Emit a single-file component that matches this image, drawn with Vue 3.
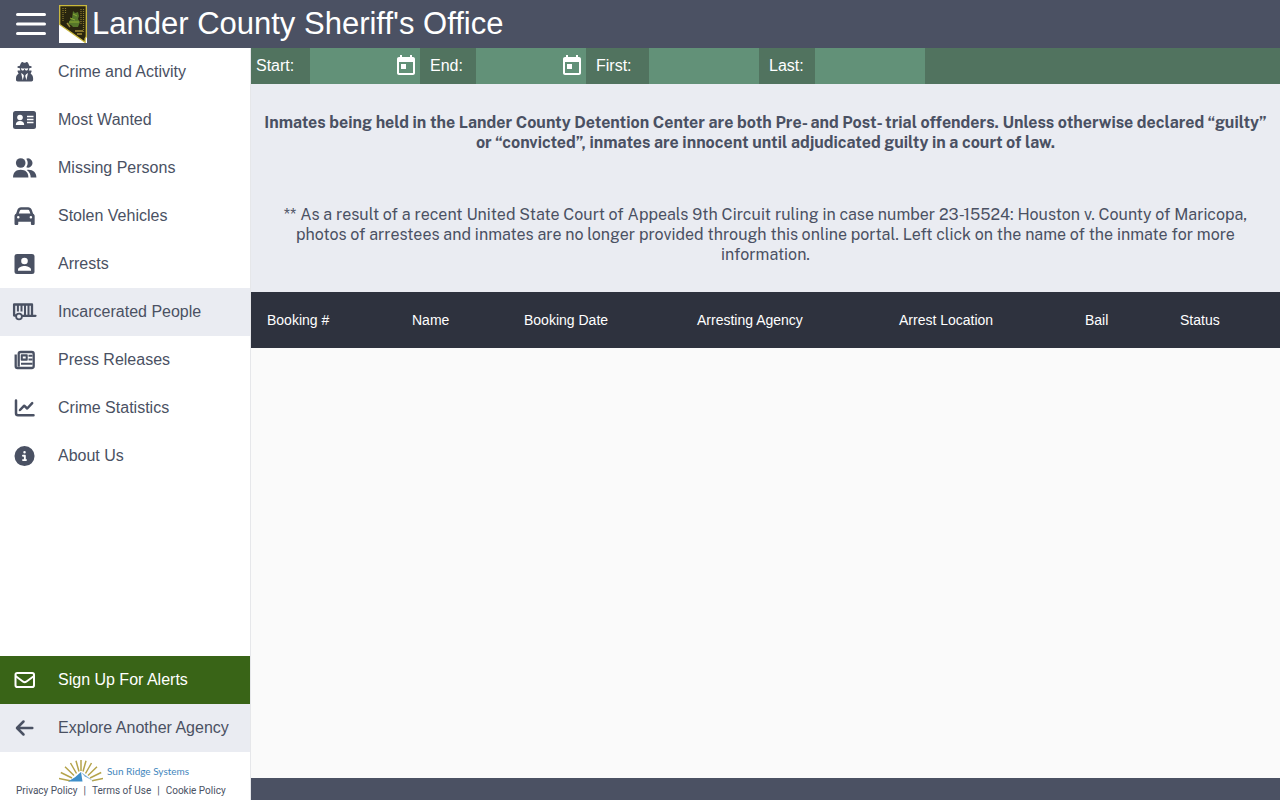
<script setup>
import { ref } from 'vue';

const activeItem = ref('Incarcerated People');
const menuOpen = ref(true);

const menuItems = [
  { label: 'Crime and Activity', icon: 'secret' },
  { label: 'Most Wanted', icon: 'card' },
  { label: 'Missing Persons', icon: 'people' },
  { label: 'Stolen Vehicles', icon: 'car' },
  { label: 'Arrests', icon: 'portrait' },
  { label: 'Incarcerated People', icon: 'trailer' },
  { label: 'Press Releases', icon: 'news' },
  { label: 'Crime Statistics', icon: 'chart' },
  { label: 'About Us', icon: 'info' }
];

const filters = ref([
  { id: 'start', label: 'Start:', date: true, value: '' },
  { id: 'end', label: 'End:', date: true, value: '' },
  { id: 'first', label: 'First:', date: false, value: '' },
  { id: 'last', label: 'Last:', date: false, value: '' }
]);

// share = relative column width
const columns = [
  { label: 'Booking #', share: 145 },
  { label: 'Name', share: 112 },
  { label: 'Booking Date', share: 173 },
  { label: 'Arresting Agency', share: 202 },
  { label: 'Arrest Location', share: 186 },
  { label: 'Bail', share: 95 },
  { label: 'Status', share: 116 }
];
const totalShare = columns.reduce((sum, c) => sum + c.share, 0);
</script>

<template>
  <div class="app">
    <header class="topbar">
      <button class="menu-button" type="button" aria-label="Menu" @click="menuOpen = !menuOpen">
        <svg viewBox="0 0 30 22" aria-hidden="true">
          <path d="M1.5 1.5h27M1.5 11h27M1.5 20.5h27" stroke="currentColor" stroke-width="3" stroke-linecap="round"/>
        </svg>
      </button>
      <svg class="agency-logo" viewBox="0 0 28 38" aria-hidden="true">
        <path d="M0 0h28v38H0z" fill="#fff"/>
        <path d="M.7.7h26.600v31l-1.200 2v3.600L.7 19.500z" fill="#29250f" stroke="#c9b83c" stroke-width="1.300"/>
        <path d="M4 3v14M6.500 3v5M22 4v15M24.500 4v23" stroke="#8a7a2c" stroke-width="1.200" stroke-dasharray="1 1"/>
        <path d="M14 6l2 2 3-1 1 4-1 3 2 3-2 5h-5l-2-2-3-1 2-4 2-2z" fill="#56772a"/>
        <path d="M10 17h10M11 13l5 2M14 9l4 2" stroke="#8dac32" stroke-width="1"/>
        <path d="M8 18l3 4M16 26h8M18 29h5" stroke="#a18d38" stroke-width="1.300"/>
      </svg>
      <h1>Lander County Sheriff's Office</h1>
    </header>

    <div class="body">
      <aside v-show="menuOpen" class="sidebar">
        <nav>
          <a
            v-for="item in menuItems"
            :key="item.label"
            href="#"
            class="nav-item"
            :class="{ active: item.label === activeItem }"
            @click.prevent="activeItem = item.label"
          >
            <svg class="nav-icon" viewBox="0 0 48 48" fill="currentColor" aria-hidden="true">
              <g v-if="item.icon === 'secret'" transform="translate(16 14) scale(.0382)">
                <path d="M383.9 308.3l23.9-62.6c4-10.5-3.7-21.7-15-21.7h-58.5c11-18.9 17.8-40.6 17.8-64v-.3c39.2-7.8 64-19.1 64-31.7 0-13.3-27.3-25.1-70.1-33-9.2-32.8-27-65.8-40.6-82.8-9.5-11.9-25.9-15.6-39.5-8.8l-27.6 13.8c-9 4.5-19.6 4.5-28.6 0L182.1 3.4c-13.6-6.8-30-3.1-39.5 8.8-13.5 17-31.4 50-40.6 82.8-42.7 7.9-70 19.7-70 33 0 12.6 24.8 23.9 64 31.7v.3c0 23.4 6.8 45.1 17.8 64H56.3c-11.5 0-19.2 11.7-14.7 22.3l25.8 60.2C27.3 329.8 0 372.7 0 422.4v44.800C0 491.9 20.1 512 44.8 512h358.4c24.7 0 44.8-20.1 44.8-44.8v-44.8c0-48.4-25.8-90.4-64.1-114.1zM176 480l-41.6-192 49.6 32 24 40-32 120zm96 0l-32-120 24-40 49.6-32L272 480zm41.7-298.500c-3.9 11.9-7 24.6-16.5 33.4-10.1 9.3-48 22.4-64-25-2.8-8.4-15.4-8.4-18.3 0-17 50.2-56 32.4-64 25-9.5-8.8-12.7-21.5-16.5-33.4-.8-2.5-6.3-5.7-6.3-5.8v-10.8c28.3 3.6 61 5.8 96 5.8s67.7-2.1 96-5.8v10.8c-.1.1-5.6 3.2-6.4 5.8z"/>
              </g>
              <g v-else-if="item.icon === 'card'">
                <rect x="13" y="15" width="23" height="18" rx="2.5"/>
                <circle cx="20" cy="21.500" r="2.800" fill="#fff"/>
                <path d="M15.800 29c0-2.600 1.600-4 4.200-4s4.200 1.400 4.200 4z" fill="#fff"/>
                <path d="M27 20.500h6.500M27 23.500h6.500M27 26.500h6.500" stroke="#fff" stroke-width="1.300"/>
              </g>
              <g v-else-if="item.icon === 'people'">
                <circle cx="20.700" cy="19" r="4.800"/>
                <path d="M13 33.500c0-5 3-7.700 7.700-7.700s7.700 2.700 7.700 7.700z"/>
                <path d="M26.300 14.700a4.600 4.600 0 1 1 0 8.600 7.800 7.800 0 0 0 0-8.600z"/>
                <path d="M26.800 25.900c5.600-.8 9.600 2.200 9.600 7.600h-5.700c0-3.300-1.400-5.900-3.900-7.600z"/>
              </g>
              <g v-else-if="item.icon === 'car'" transform="translate(14.500 14) scale(.0394)">
                <path d="M135.2 117.400L109.100 192H402.900l-26.100-74.600C372.300 104.600 360.200 96 346.600 96H165.400c-13.600 0-25.700 8.600-30.200 21.400zM39.600 196.800L74.800 96.300C88.300 57.800 124.600 32 165.400 32H346.600c40.800 0 77.100 25.800 90.600 64.300l35.200 100.500c23.200 9.600 39.600 32.500 39.600 59.200V400v48c0 17.700-14.300 32-32 32H448c-17.700 0-32-14.300-32-32V400H96v48c0 17.700-14.300 32-32 32H32c-17.700 0-32-14.300-32-32V400 256c0-26.700 16.400-49.600 39.600-59.200zM128 288a32 32 0 1 0 -64 0 32 32 0 1 0 64 0zm288 32a32 32 0 1 0 0-64 32 32 0 1 0 0 64z"/>
              </g>
              <g v-else-if="item.icon === 'portrait'">
                <rect x="14.500" y="14" width="20" height="20" rx="2.500"/>
                <circle cx="24.500" cy="21" r="3.300" fill="#fff"/>
                <path d="M18 30.800v-1.200c0-2.400 4.200-3.600 6.500-3.600s6.500 1.200 6.500 3.600v1.200z" fill="#fff"/>
              </g>
              <g v-else-if="item.icon === 'trailer'" fill="none" stroke="currentColor">
                <path d="M15.500 27.500h-1.400V16.500h17.900V27.500M22.500 27.800H35.500" stroke-width="2.300" stroke-linejoin="round" stroke-linecap="round"/>
                <path d="M17.900 16.500v7M21.500 16.500v7M25 16.500V27M28.500 16.500V27" stroke-width="2"/>
                <circle cx="19" cy="28.500" r="2.900" stroke-width="1.800"/>
              </g>
              <g v-else-if="item.icon === 'news'" fill="none" stroke="currentColor" stroke-width="2.300" stroke-linejoin="round">
                <path d="M18.700 30.500V18a2 2 0 0 1 2-2h11a2 2 0 0 1 2 2v12a2 2 0 0 1-2 2H17.500a1.800 1.800 0 0 1-1.800-1.800V18.500"/>
                <path d="M21.500 19h5.500v5h-5.500z" fill="currentColor" stroke-width="1.500"/>
                <path d="M22.800 20.500h2.900v2h-2.900z" fill="#fff" stroke="none"/>
                <path d="M28.500 19.800h4M28.500 23.600h4M21 27.800h11.500" stroke-width="2"/>
              </g>
              <g v-else-if="item.icon === 'chart'" fill="none" stroke="currentColor" stroke-width="2.500" stroke-linecap="round" stroke-linejoin="round">
                <path d="M16 16.500v12.800q0 2 2 2h15.500"/>
                <path d="M20 26l4.200-4.300 3 2.800 5-5.300"/>
              </g>
              <g v-else transform="translate(14.500 14) scale(.0392)">
                <path d="M256 512A256 256 0 1 0 256 0a256 256 0 1 0 0 512zM216 336h24V272H216c-13.300 0-24-10.700-24-24s10.700-24 24-24h48c13.300 0 24 10.700 24 24v88h8c13.300 0 24 10.700 24 24s-10.700 24-24 24H216c-13.300 0-24-10.700-24-24s10.700-24 24-24zm40-208a32 32 0 1 1 0 64 32 32 0 1 1 0-64z"/>
              </g>
            </svg>
            <span>{{ item.label }}</span>
          </a>
        </nav>

        <div class="sidebar-bottom">
          <a href="#" class="nav-item alerts">
            <svg class="nav-icon" viewBox="0 0 48 48" fill="none" stroke="currentColor" stroke-width="2" stroke-linejoin="round" aria-hidden="true">
              <rect x="15.500" y="17" width="18.500" height="14" rx="1.800"/>
              <path d="M15.500 20l7.700 5.700q1.500 1 3 0L34 20"/>
            </svg>
            <span>Sign Up For Alerts</span>
          </a>
          <a href="#" class="nav-item explore">
            <svg class="nav-icon" viewBox="0 0 48 48" fill="none" stroke="currentColor" stroke-width="2.500" stroke-linecap="round" stroke-linejoin="round" aria-hidden="true">
              <path d="M32.300 24H17.500M23.500 17.500L17 24l6.500 6.500"/>
            </svg>
            <span>Explore Another Agency</span>
          </a>
          <footer class="legal">
            <a href="#" class="vendor">
              <svg viewBox="0 0 44 22" aria-hidden="true">
                <g stroke="#b5a44c" stroke-width="1.500">
                  <path d="M0 18.500l11 2.200M1.800 12.500L13 18M6 6.800l9 8.700M11.500 3l6 10.500M17 .8l3 10.700M22 0v11M27 .8l-3 10.700M32.500 3l-6 10.500M38 6.800l-9 8.700M42.200 12.500L31 18M44 18.500l-11 2.200"/>
                </g>
                <path d="M9 21.500l7-4.300 6-5.200 1.500 9.500z" fill="#3e8fca"/>
                <path d="M22 12l13 9.500-9.500-5.200z" fill="#7bb1dc"/>
              </svg>
              <span>Sun Ridge Systems</span>
            </a>
            <div class="policies">
              <a href="#">Privacy Policy</a>
              <span>|</span>
              <a href="#">Terms of Use</a>
              <span>|</span>
              <a href="#">Cookie Policy</a>
            </div>
          </footer>
        </div>
      </aside>

      <main class="content">
        <form class="filters" @submit.prevent>
          <template v-for="filter in filters" :key="filter.id">
            <label :for="filter.id" :class="'label-' + filter.id">{{ filter.label }}</label>
            <div class="field">
              <input :id="filter.id" v-model="filter.value" type="text" autocomplete="off">
              <button v-if="filter.date" type="button" aria-label="Choose date">
                <svg viewBox="0 0 24 24" fill="currentColor" aria-hidden="true">
                  <path d="M7 10h5v5H7zM19 3h-1V1h-2v2H8V1H6v2H5c-1.110 0-1.990.9-1.990 2L3 19c0 1.100.89 2 2 2h14c1.100 0 2-.9 2-2V5c0-1.100-.9-2-2-2zm0 16H5V8h14v11z"/>
                </svg>
              </button>
            </div>
          </template>
        </form>

        <section class="notice">
          <p class="strong">
            Inmates being held in the Lander County Detention Center are both Pre- and Post- trial offenders. Unless otherwise declared “guilty” or “convicted”, inmates are innocent until adjudicated guilty in a court of law.
          </p>
          <p>
            ** As a result of a recent United State Court of Appeals 9th Circuit ruling in case number 23-15524: Houston v. County of Maricopa, photos of arrestees and inmates are no longer provided through this online portal. Left click on the name of the inmate for more information.
          </p>
        </section>

        <div class="records">
          <table>
            <thead>
              <tr>
                <th
                  v-for="column in columns"
                  :key="column.label"
                  scope="col"
                  :style="{ width: (column.share / totalShare) * 100 + '%' }"
                >{{ column.label }}</th>
              </tr>
            </thead>
          </table>
        </div>

        <div class="bottom-bar"></div>
      </main>
    </div>
  </div>
</template>

<style>
body {
  margin: 0;
}
</style>

<style scoped>
.app {
  display: flex;
  flex-direction: column;
  min-height: 100vh;
  font-family: "Liberation Sans", Arial, sans-serif;
  font-size: 16px;
  color: #4a5163;
}

a {
  color: inherit;
  text-decoration: none;
}

button {
  padding: 0;
  border: 0;
  background: none;
  color: inherit;
  cursor: pointer;
}

svg {
  display: block;
}

/* header */
.topbar {
  display: flex;
  align-items: center;
  height: 48px;
  padding-left: 16px;
  background: #4b5163;
  color: #fff;
}

.menu-button svg {
  width: 30px;
  height: 22px;
}

.agency-logo {
  width: 28px;
  height: 38px;
  margin: 0 5px 0 13px;
}

.topbar h1 {
  margin: 0;
  font-size: 31px;
  font-weight: 400;
  line-height: 48px;
}

.body {
  flex: 1;
  display: flex;
}

/* sidebar */
.sidebar {
  flex: 0 0 250px;
  display: flex;
  flex-direction: column;
  justify-content: space-between;
  border-right: 1px solid #e6e7ea;
  background: #fff;
}

.nav-item {
  display: flex;
  align-items: center;
  gap: 10px;
  height: 48px;
  white-space: nowrap;
}

.nav-icon {
  width: 48px;
  height: 48px;
}

.nav-item.active,
.nav-item.explore {
  background: #eaecf2;
}

.nav-item.alerts {
  background: #396417;
  color: #fff;
}

.legal {
  display: flex;
  flex-direction: column;
  height: 48px;
  font-family: Roboto, sans-serif;
  font-size: 10px;
}

.vendor {
  display: flex;
  align-items: center;
  gap: 4px;
  padding: 8px 0 0 59px;
  font-family: Lato, sans-serif;
  line-height: 22px;
  color: #3f86bd;
}

.vendor svg {
  width: 44px;
  height: 22px;
}

.policies {
  display: flex;
  gap: 6px;
  padding-left: 16px;
  line-height: 18px;
  white-space: nowrap;
}

/* main area */
.content {
  flex: 1;
  min-width: 0;
  display: flex;
  flex-direction: column;
  background: #fafafa;
}

.filters {
  display: flex;
  height: 36px;
  background: #51735f;
  color: #fff;
  line-height: 36px;
}

.filters label {
  box-sizing: border-box;
  width: 56px;
  padding-left: 10px;
}

.filters .label-start {
  width: 59px;
  padding-left: 5px;
}

.filters .label-first {
  width: 63px;
}

.field {
  display: flex;
  align-items: center;
  width: 110px;
  background: #629178;
}

.field input {
  flex: 1;
  min-width: 0;
  height: 100%;
  box-sizing: border-box;
  padding: 0 6px;
  border: 0;
  outline: 0;
  background: transparent;
  color: #fff;
  font: inherit;
}

.field button {
  margin-right: 2px;
}

.field svg {
  width: 24px;
  height: 24px;
}

.notice {
  display: flex;
  flex-direction: column;
  gap: 52px;
  padding: 29px 12px 27px;
  background: #eaecf2;
  font-family: "Public Sans", Inter, sans-serif;
  line-height: 20px;
  text-align: center;
}

.notice p {
  margin: 0;
}

.notice .strong {
  font-weight: 700;
}

.records {
  flex: 1;
}

table {
  width: 100%;
  table-layout: fixed;
  border-collapse: collapse;
}

th {
  box-sizing: border-box;
  height: 56px;
  padding: 0 0 0 16px;
  background: #2e323e;
  color: #fff;
  font-size: 14px;
  font-weight: 400;
  text-align: left;
}

.bottom-bar {
  height: 22px;
  background: #4b5163;
}
</style>
